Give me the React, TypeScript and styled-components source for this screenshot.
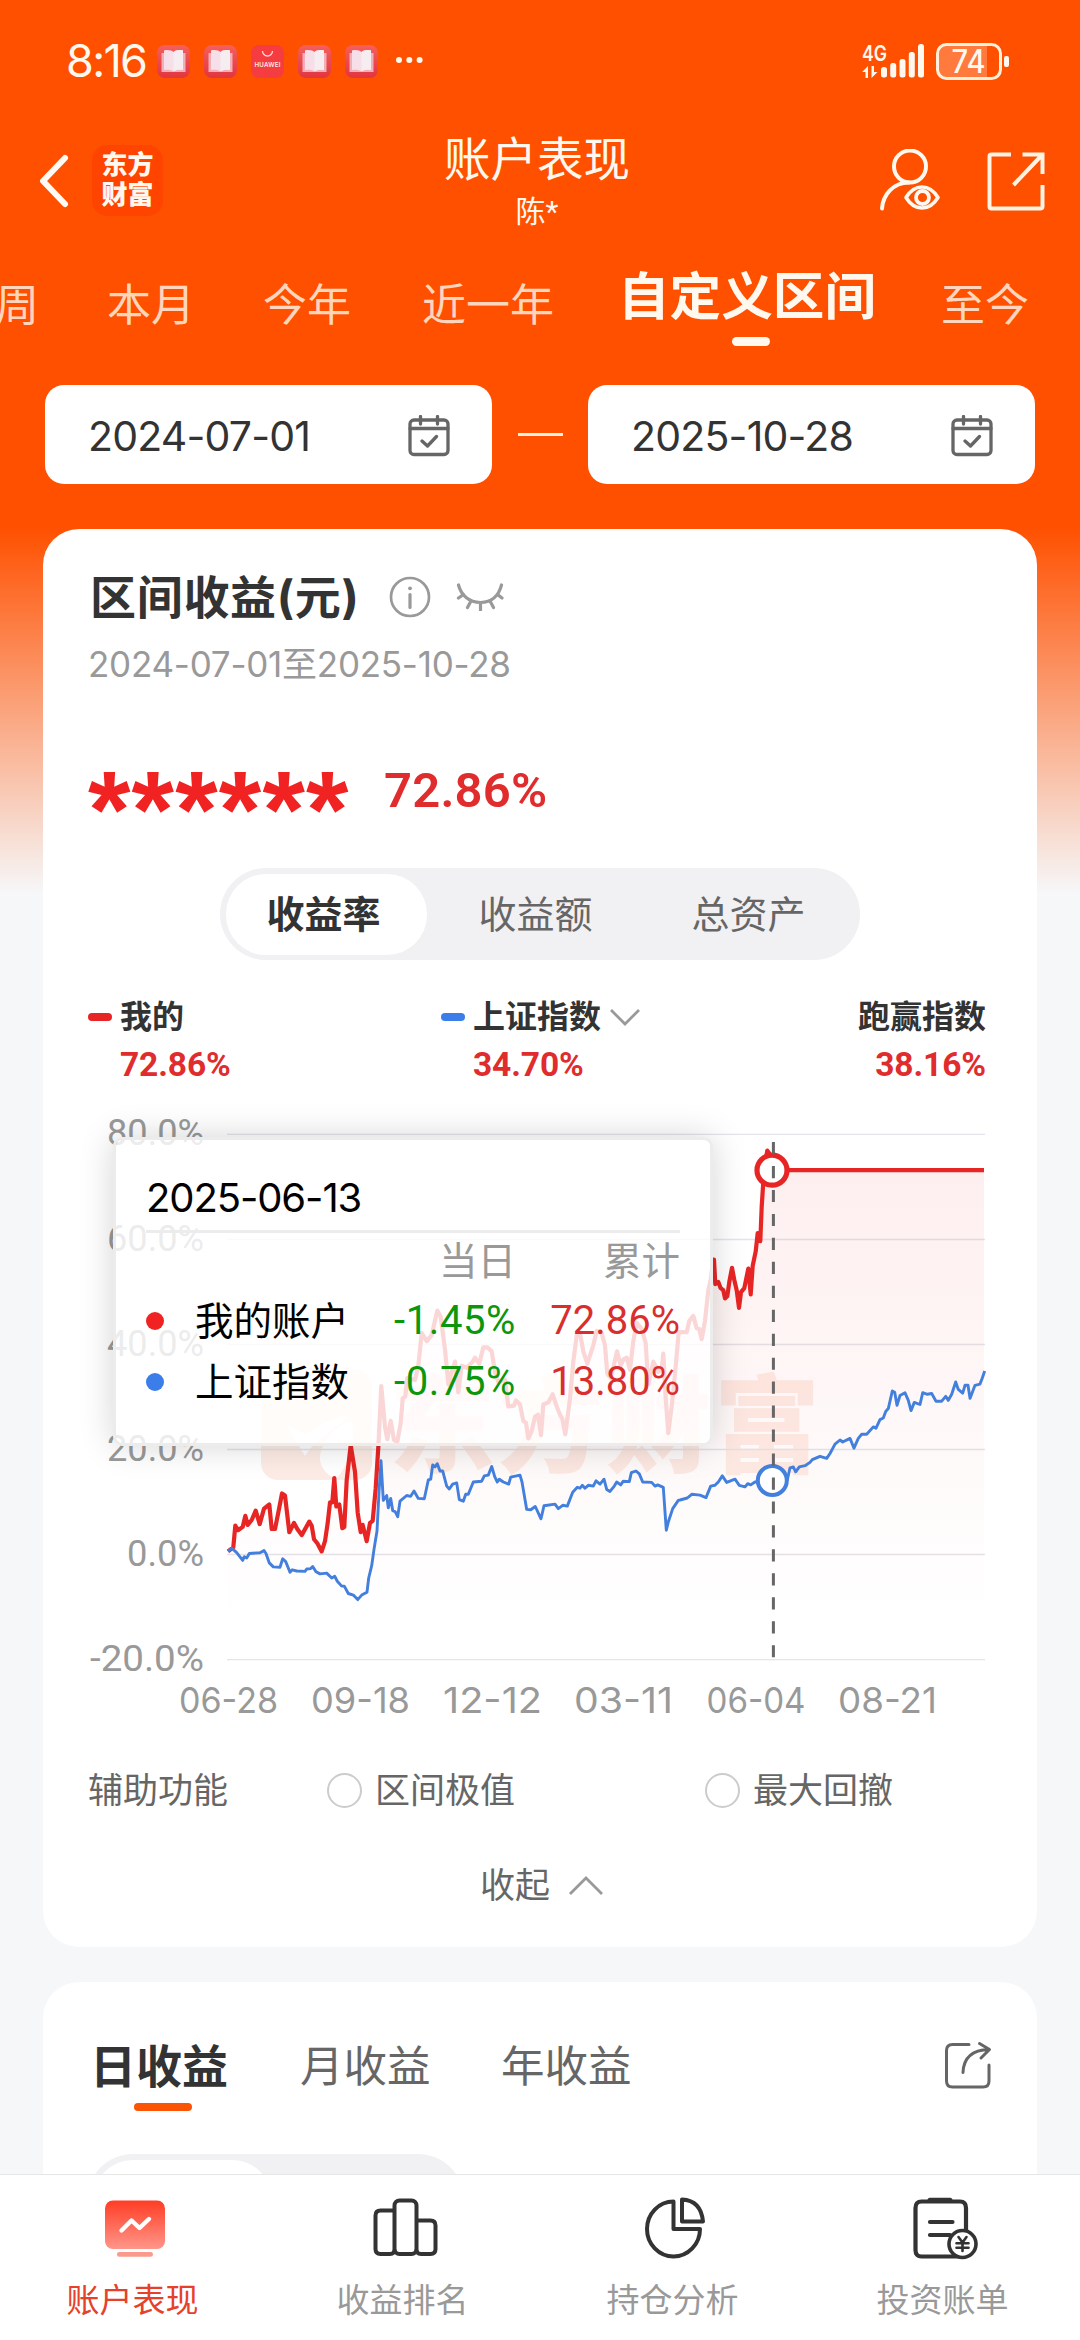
import React from "react";
import styled, { createGlobalStyle, css } from "styled-components";

const GlobalStyle = createGlobalStyle`
  * { box-sizing: border-box; }
  body {
    margin: 0;
    background: #f6f7f9;
    font-family: Inter, "Noto Sans CJK SC", "Noto Sans", sans-serif;
    color: #333;
  }
  svg { display: block; flex: none; }
`;

const FIGURES = `Roboto, "Noto Sans CJK SC", sans-serif`;

const ORANGE = "#ff5000";
const CREAM = "#fff8ee";
const RED = "#e02c2c";
const BLUE = "#437fdc";

const Screen = styled.div`
  width: 1080px;
  height: 2340px;
  overflow: hidden;
  display: flex;
  flex-direction: column;
`;

const Content = styled.main`
  flex: 1;
  min-height: 0;
  overflow: hidden;
  background: linear-gradient(${ORANGE} 0, ${ORANGE} 527px, #f6f7f9 893px);
`;

/* ---------- status bar ---------- */

const StatusBar = styled.div`
  display: flex;
  align-items: center;
  justify-content: space-between;
  height: 91px;
  padding: 31px 71px 0 66px;
  color: ${CREAM};
`;

const StatusGroup = styled.div<{ $gap: number }>`
  display: flex;
  align-items: center;
  gap: ${(p) => p.$gap}px;
`;

const Clock = styled.span`
  width: 77px;
  font-size: 45px;
  line-height: 60px;
  letter-spacing: -1.7px;
`;

const BookIcon = () => (
  <svg width="33" height="33" viewBox="0 0 33 33">
    <defs>
      <linearGradient id="book" x1="0" y1="0" x2="0" y2="1">
        <stop offset="0" stopColor="#f4605c" />
        <stop offset="1" stopColor="#e2353f" />
      </linearGradient>
    </defs>
    <rect width="33" height="33" rx="8" fill="url(#book)" />
    <path d="M4.500 8h24v19h-24z" fill="#f3aeb8" />
    <path d="M7 5.500c4-1 8 0 9.500 1.500 1.500-1.500 5.500-2.500 9.500-1.500V25c-4-.6-8 0-9.500 1.600C15 25 11 24.400 7 25z" fill="#f6dfe8" />
    <path d="M16.500 7c1.500-1.500 5.500-2.500 9.500-1.500V25c-4-.6-8 0-9.500 1.600z" fill="#f5edf0" />
  </svg>
);

const StoreIcon = () => (
  <svg width="33" height="33" viewBox="0 0 33 33">
    <rect width="33" height="33" rx="8" fill="#f43c41" />
    <path d="M11.500 6a5 5 0 0 0 10 0" fill="none" stroke="#ffd9d0" strokeWidth="1.300" />
    <text x="16.500" y="21.500" textAnchor="middle" fontSize="6.200" fontWeight="600" fill="#ffe9e2" textLength="26">
      HUAWEI
    </text>
  </svg>
);

const MoreDots = () => (
  <svg width="31" height="8" viewBox="-3 0 31 8" fill={CREAM}>
    <circle cx="4" cy="3" r="3" />
    <circle cx="14.300" cy="3" r="3" />
    <circle cx="24.600" cy="3" r="3" />
  </svg>
);

const SignalIcon = () => (
  <svg width="63" height="36" viewBox="0 0 63 36" fill={CREAM}>
    <text x="0" y="18" fontSize="22" fontWeight="600" textLength="25" lengthAdjust="spacingAndGlyphs">4G</text>
    <path d="M0 29l6-6v12H3.500v-6zM15.500 29l-6 6V23h2.500v6z" />
    <rect x="19" y="24" width="6" height="10.500" rx="2.500" />
    <rect x="28.200" y="20" width="6" height="14.500" rx="2.500" />
    <rect x="37.500" y="16" width="6" height="18.500" rx="2.500" />
    <rect x="46.800" y="9" width="6" height="25.500" rx="2.500" />
    <rect x="56" y="1" width="6" height="33.500" rx="2.500" />
  </svg>
);

const BatteryIcon = () => (
  <svg width="73" height="37" viewBox="0 0 73 37">
    <path d="M10 2.500H51V34.500H10a8 8 0 0 1-8-8v-16a8 8 0 0 1 8-8z" fill="#ff7a3c" />
    <rect x="1.500" y="1.500" width="63" height="34" rx="9" fill="none" stroke="#fff0dc" strokeWidth="3" />
    <rect x="68" y="13" width="5" height="11" rx="2" fill={CREAM} />
    <text x="15.500" y="30" fontSize="32" fontWeight="500" fill={CREAM} textLength="34" lengthAdjust="spacingAndGlyphs">74</text>
  </svg>
);

/* ---------- header ---------- */

const Header = styled.header`
  display: grid;
  grid-template-columns: 397px 280px 1fr;
  height: 100px;
  margin-top: 40px;
  color: ${CREAM};
`;

const HeaderLeft = styled.div`
  display: flex;
  align-items: center;
  gap: 22px;
  padding-left: 38px;
`;

const HeaderRight = styled.div`
  display: flex;
  align-items: center;
  justify-content: flex-end;
  gap: 45px;
  padding-right: 35px;
`;

const Logo = styled.div`
  width: 71px;
  height: 71px;
  margin-top: -2px;
  padding-top: 5px;
  border-radius: 15px;
  background: #ff4400;
  text-align: center;
  font-size: 26px;
  font-weight: 900;
  line-height: 30px;
`;

const HeaderTitle = styled.div`
  text-align: center;
  font-size: 46.5px;
  line-height: 57px;
`;

const AccountName = styled.div`
  margin-top: 5px;
  text-align: center;
  font-family: ${FIGURES};
  font-size: 30px;
  line-height: 38px;
`;

const BackIcon = () => (
  <svg width="32" height="56" viewBox="0 0 32 56" fill="none" stroke="#fffaf4" strokeWidth="6" strokeLinecap="round" strokeLinejoin="round">
    <path d="M27 5L5 28l22 23" />
  </svg>
);

const UserViewIcon = () => (
  <svg width="64" height="64" viewBox="0 0 64 64" fill="none" stroke={CREAM} strokeWidth="4" strokeLinecap="round">
    <circle cx="32" cy="17.500" r="16" />
    <path d="M4 59.500C5 46 15 33.500 31 33.500" />
    <path d="M28 48.500c4-6.500 9-10.500 16-10.500s12 4 16 10.500c-4 6.500-9 10.500-16 10.500s-12-4-16-10.500z" strokeWidth="3.600" strokeLinejoin="round" />
    <circle cx="44.500" cy="48.500" r="6.500" strokeWidth="3.800" />
  </svg>
);

const OpenIcon = () => (
  <svg width="58" height="60" viewBox="0 0 58 60" fill="none" stroke="#fff3e4" strokeWidth="4">
    <path d="M24 3.500H4.500Q2.500 3.500 2.500 5.500V55.500Q2.500 57.500 4.500 57.500H53Q55.500 57.500 55.500 55.500V34" />
    <path d="M35.500 3.500h20V23M55 4L26.500 34" />
  </svg>
);

/* ---------- period tabs ---------- */

const PeriodTabs = styled.nav`
  display: flex;
  align-items: flex-start;
  gap: 68px;
  height: 119px;
  padding-top: 35px;
  margin-left: -5px;
  white-space: nowrap;
`;

const PeriodTab = styled.div<{ $active?: boolean; $nudge?: number }>`
  flex: none;
  font-size: 44px;
  line-height: 60px;
  margin-top: 9px;
  margin-left: ${(p) => p.$nudge || 0}px;
  color: #ffd6bd;
  ${(p) =>
    p.$active &&
    css`
      margin: 0 -3px 0 -4px;
      font-size: 51.6px;
      font-weight: 700;
      color: ${CREAM};
      &::after {
        content: "";
        display: block;
        width: 38px;
        height: 9px;
        margin: 11px auto 0;
        border-radius: 5px;
        background: ${CREAM};
        transform: translateX(4px);
      }
    `}
`;

/* ---------- date range ---------- */

const DateRange = styled.div`
  display: flex;
  align-items: center;
  justify-content: space-between;
  height: 99px;
  margin: 35px 45px 0;
`;

const DateField = styled.div`
  display: flex;
  align-items: center;
  justify-content: space-between;
  width: 447px;
  height: 99px;
  padding: 2px 42px 0 43px;
  border-radius: 19px;
  background: #fff;
  font-size: 41px;
  letter-spacing: -0.8px;
`;

const RangeDash = styled.div`
  width: 45px;
  height: 3px;
  background: #fff0e0;
`;

const CalendarIcon = () => (
  <svg width="42" height="42" viewBox="0 0 42 42" fill="none" stroke="#666" strokeWidth="3.300" strokeLinecap="round" strokeLinejoin="round">
    <rect x="2" y="5" width="38" height="34.500" rx="4" />
    <path d="M2 13.500h38M12.500 1.500v7.500M29.500 1.500v7.500M14 26l5.500 5L28.500 21.500" />
  </svg>
);

/* ---------- cards ---------- */

const Card = styled.section`
  margin: 45px 43px 0;
  padding: 38px 0 37px;
  border-radius: 36px;
  background: #fff;
`;

const CardTitleRow = styled.div`
  display: flex;
  align-items: center;
  height: 60px;
  padding-left: 47px;
`;

const CardTitle = styled.h1`
  margin: 0 34px 0 0;
  width: 265px;
  font-size: 46px;
  font-weight: 700;
  line-height: 60px;
  letter-spacing: 0.7px;
  white-space: nowrap;
`;

const PeriodText = styled.div`
  margin: 17px 0 0 45px;
  font-size: 35px;
  line-height: 40px;
  letter-spacing: -0.25px;
  color: #999;
`;

const InfoIcon = () => (
  <svg width="42" height="42" viewBox="0 0 42 42" fill="none" stroke="#999" strokeWidth="2.700" strokeLinecap="round">
    <circle cx="21" cy="21" r="19" />
    <path d="M21 18.500v13" strokeWidth="3.200" />
    <circle cx="21" cy="12.300" r="1.900" fill="#999" stroke="none" />
  </svg>
);

const EyeClosed = styled.svg`
  margin-left: 25px;
`;

const EyeClosedIcon = () => (
  <EyeClosed width="48" height="28" viewBox="0 0 48 28" fill="none" stroke="#999" strokeWidth="3.200" strokeLinecap="round">
    <path d="M2.500 2C5 12 13 19.500 24.500 19.500S43 12 45.500 2M7.500 11.500L2.500 15M15 18l-3.500 6.500M24.500 19.500V27M34 18l3.500 6.500M41.500 11.500L46 15" />
  </EyeClosed>
);

const ProfitRow = styled.div`
  display: flex;
  align-items: flex-start;
  height: 60px;
  margin: 76px 0 0 45px;
`;

const MaskedAmount = styled.span`
  width: 296px;
  font-family: "Liberation Sans", Arial, sans-serif;
  font-size: 109px;
  font-weight: 700;
  line-height: 99px;
  letter-spacing: 1.2px;
  color: #f02222;
`;

const ProfitRate = styled.span`
  font-family: ${FIGURES};
  font-size: 49px;
  font-weight: 600;
  line-height: 61px;
  letter-spacing: 0.2px;
  color: ${RED};
`;

const Segmented = styled.div`
  display: grid;
  grid-template-columns: 201px 213px 213px;
  width: 640px;
  height: 92px;
  margin: 48px 0 0 177px;
  padding: 6px;
  border-radius: 46px;
  background: #f1f1f4;
`;

const Segment = styled.div<{ $active?: boolean }>`
  padding: ${(p) => (p.$active ? "0 6px 0 0" : "0 0 0 4px")};
  border-radius: 40px;
  text-align: center;
  font-size: 38px;
  line-height: 81px;
  color: ${(p) => (p.$active ? "#333" : "#666")};
  font-weight: ${(p) => (p.$active ? 700 : 400)};
  background: ${(p) => (p.$active ? "#fff" : "transparent")};
`;

const Legend = styled.div`
  display: grid;
  grid-template-columns: 353px 1fr auto;
  height: 88px;
  margin: 37px 51px 0 45px;
`;

const LegendItem = styled.div<{ $right?: boolean }>`
  display: grid;
  grid-template-columns: auto 1fr;
  grid-template-rows: 40px 40px;
  column-gap: 8px;
  row-gap: 8px;
  align-items: center;
  justify-items: ${(p) => (p.$right ? "end" : "start")};
`;

const LegendMark = styled.span<{ $color: string }>`
  width: 24px;
  height: 8px;
  border-radius: 4px;
  background: ${(p) => p.$color};
`;

const LegendName = styled.span`
  display: flex;
  align-items: center;
  gap: 9px;
  height: 40px;
  font-size: 32px;
  font-weight: 700;
  line-height: 42px;
`;

const LegendValue = styled.span`
  grid-column: 2;
  font-family: ${FIGURES};
  font-size: 33.5px;
  font-weight: 700;
  line-height: 40px;
  letter-spacing: -0.1px;
  color: ${RED};
`;

const ChevronIcon = ({ up, w, h }: { up?: boolean; w: number; h: number }) => (
  <svg width={w} height={h} viewBox={`0 0 ${w} ${h}`} fill="none" stroke="#999" strokeWidth="2.800">
    <path d={up ? `M1 ${h - 1}L${w / 2} 2L${w - 1} ${h - 1}` : `M1 1L${w / 2} ${h - 2}L${w - 1} 1`} />
  </svg>
);

/* ---------- chart ---------- */

type Sample = [number, number];

const ChartArea = styled.div`
  position: relative;
  height: 645px;
  margin-left: 17px;
`;

const shift = (dx: number, samples: Sample[]): Sample[] => samples.map(([x, y]) => [x + dx, y]);

const toPoints = (samples: Sample[]) =>
  samples.map(([x, y]) => `${(x / 3).toFixed(1)},${(y / 2.45).toFixed(1)}`).join(" ");

const mine: Sample[] = [
  [504, 1155], [520, 1145], [526, 1092], [534, 1103], [548, 1095], [556, 1068], [563, 1090], [575, 1078], [587, 1055],
  [599, 1088], [612, 1050], [628, 1040], [635, 1100], [645, 1100], [655, 1060], [666, 1013], [675, 1018], [688, 1108],
  [702, 1085], [712, 1100], [725, 1115], [748, 1082], [755, 1092], [762, 1125], [772, 1135], [785, 1155], [795, 1130],
  [803, 1085], [810, 1035], [817, 1035], [823, 975], [829, 1045], [838, 1040], [847, 1098], [853, 1095], [860, 980],
  [872, 895], [885, 960], [893, 1060], [902, 1108], [908, 1090], [920, 1130], [930, 1085], [938, 1080], [947, 1000],
  [955, 900],
  ...shift(960, [
    [4, 750], [15, 850], [22, 880], [32, 835], [42, 882], [52, 886], [62, 840], [68, 780], [76, 775], [82, 730],
    [105, 735], [115, 700], [125, 620], [140, 640], [155, 625], [162, 600], [172, 565], [182, 580], [195, 660],
    [205, 745], [215, 715], [225, 690], [235, 765], [245, 700], [260, 705], [278, 690], [285, 680], [298, 695],
    [310, 655], [322, 655], [335, 665], [345, 715], [355, 740], [375, 735], [385, 800], [402, 798], [408, 785],
    [420, 795], [430, 835], [438, 840], [445, 878], [455, 860], [465, 825], [474, 820], [483, 870], [490, 795],
    [505, 790], [518, 770], [530, 800], [540, 820], [547, 830], [556, 868], [570, 780], [580, 690], [592, 615],
    [600, 620], [610, 665], [622, 695], [640, 650], [650, 615], [665, 620], [675, 650], [682, 720], [692, 730],
    [700, 705], [711, 665], [722, 700], [730, 685], [740, 680], [750, 710], [760, 640], [770, 595], [785, 610],
    [797, 645], [805, 745], [820, 690], [835, 715], [845, 710], [850, 670], [857, 780], [865, 865], [875, 800],
    [885, 720], [896, 618], [920, 618], [928, 590], [940, 578], [950, 608], [958, 610], [965, 635], [975, 590],
    [985, 515], [992, 490], [1000, 440],
  ]),
  ...shift(1860, [
    [102, 440], [106, 500], [115, 495], [122, 510], [130, 515], [135, 535], [142, 530], [148, 495], [156, 460],
    [163, 490], [170, 515], [177, 558], [183, 520], [193, 510], [205, 462], [212, 525], [218, 455], [227, 420],
    [233, 375], [241, 395], [245, 310], [250, 250], [256, 200], [262, 173], [268, 180], [276, 221], [912, 221],
  ]),
];

const index: Sample[] = [
  [504, 1155], [515, 1147], [530, 1158], [548, 1177], [553, 1168], [560, 1171], [568, 1160], [600, 1158], [612, 1153],
  [618, 1160], [628, 1183], [640, 1193], [660, 1194], [668, 1173], [677, 1180], [690, 1206], [697, 1200], [710, 1203],
  [735, 1204], [740, 1198], [752, 1197], [758, 1192], [768, 1205], [780, 1210], [800, 1208], [815, 1220], [824, 1216],
  [832, 1228], [845, 1240], [853, 1240], [865, 1258], [880, 1262], [893, 1273], [905, 1262], [921, 1255], [926, 1220],
  [935, 1190], [942, 1150], [951, 1105], [957, 1010],
  ...shift(960, [
    [3, 933], [10, 1030], [20, 1018], [25, 1048], [32, 1025], [38, 1055], [46, 1058], [53, 1070], [60, 1032],
    [80, 1018], [92, 1020], [102, 1007], [115, 1025], [133, 1026], [145, 980], [152, 978], [158, 943], [165, 948],
    [172, 940], [180, 958], [188, 958], [200, 995], [208, 1002], [218, 990], [230, 987], [238, 1028], [250, 1032],
    [257, 1015], [265, 1015], [280, 985], [305, 983], [313, 970], [325, 968], [335, 947], [344, 972], [352, 985],
    [358, 978], [370, 985], [386, 990], [392, 973], [420, 968], [426, 985], [440, 1052], [452, 1053], [466, 1045],
    [483, 1075], [492, 1043], [525, 1039], [535, 1050], [548, 1042], [562, 1044], [578, 1010], [592, 998],
    [600, 1000], [607, 993], [615, 1000], [625, 993], [640, 995], [648, 982], [660, 990], [672, 978], [680, 1003],
    [690, 1008], [703, 995], [710, 985], [722, 992], [730, 983], [748, 984], [754, 962], [768, 958], [778, 965],
    [788, 985], [815, 986], [825, 995], [833, 992], [850, 998], [859, 1103], [865, 1083], [878, 1050], [895, 1030],
  ]),
  ...shift(1860, [
    [0, 1029], [22, 1024], [35, 1015], [60, 1017], [78, 1023], [92, 995], [105, 993], [115, 985], [127, 970],
    [140, 986], [165, 978], [178, 993], [195, 997], [203, 989], [212, 992], [225, 985], [276, 981], [322, 980],
    [330, 950], [340, 948], [347, 960], [358, 948], [375, 945], [390, 937], [397, 930], [420, 922], [440, 927],
    [450, 915], [465, 892], [480, 882], [488, 887], [510, 878], [522, 902], [535, 878], [545, 868], [560, 868],
    [580, 850], [588, 853], [600, 832], [610, 828], [617, 812], [625, 805], [637, 762], [644, 765], [651, 797],
    [660, 773], [675, 766], [685, 785], [693, 810], [703, 790], [720, 795], [728, 766], [742, 770], [755, 768],
    [768, 787], [785, 787], [797, 775], [805, 785], [815, 770], [827, 740], [835, 758], [848, 767], [855, 748],
    [864, 748], [870, 780], [885, 748], [900, 745], [907, 730], [914, 713],
  ]),
];

const yTicks = [
  { label: "80.0%", y: 54.3, w: 97 },
  { label: "60.0%", y: 159.5, w: 97 },
  { label: "40.0%", y: 264.5, w: 97 },
  { label: "20.0%", y: 369.5, w: 97 },
  { label: "0.0%", y: 474.5, w: 77 },
  { label: "-20.0%", y: 579.6, w: 114 },
];

const xTicks = [
  { label: "06-28", x: 168 },
  { label: "09-18", x: 300 },
  { label: "12-12", x: 432 },
  { label: "03-11", x: 563 },
  { label: "06-04", x: 695.5 },
  { label: "08-21", x: 827 },
];

const ReturnChart = () => (
  <svg width="940" height="645" viewBox="0 5 940 645">
    <defs>
      <linearGradient id="fill" gradientUnits="userSpaceOnUse" x1="0" y1="90" x2="0" y2="540">
        <stop offset="0" stopColor="#f04040" stopOpacity="0.085" />
        <stop offset="1" stopColor="#f04040" stopOpacity="0" />
      </linearGradient>
    </defs>
    <g fill="#fbcdb8" opacity="0.36">
      <path
        transform="translate(0 -4)"
        fillRule="evenodd"
        d="M220 293h75a17 17 0 0 1 17 17v77a17 17 0 0 1-17 17h-77a17 17 0 0 1-17-17v-68c22 14 48-2 92-28zM227 350l18 30c8-14 28-26 44-40-22 2-42 18-44 18zM262 372c-6 14 2 26 14 31 12-12 20-36 16-58-14 4-24 12-30 27z"
      />
      <text x="329" y="384" fontSize="106" fontWeight="900" textLength="431">
        东方财富
      </text>
    </g>
    {yTicks.map((t) => (
      <g key={t.label}>
        <path d={`M167 ${t.y}H925`} stroke="#e4e4ea" strokeWidth="1.300" />
        <text
          x={144 - t.w}
          y={t.y + 11}
          fontSize="36"
          fontFamily={FIGURES}
          fill="#999"
          textLength={t.w}
          lengthAdjust="spacingAndGlyphs"
        >
          {t.label}
        </text>
      </g>
    ))}
    {xTicks.map((t) => (
      <text key={t.label} x={t.x - 49} y="633" fontSize="35.500" fill="#999" textLength="99" lengthAdjust="spacingAndGlyphs">
        {t.label}
      </text>
    ))}
    <polygon points={`168,579 ${toPoints(mine)} 924,579`} fill="url(#fill)" />
    <polyline points={toPoints(mine)} fill="none" stroke="#e82525" strokeWidth="4.200" strokeLinejoin="round" />
    <polyline points={toPoints(index)} fill="none" stroke={BLUE} strokeWidth="2.900" strokeLinejoin="round" />
    <circle cx="712" cy="90.200" r="15" fill="#fff" stroke="#e82525" strokeWidth="5.200" />
    <circle cx="712.300" cy="400.500" r="14.500" fill="#fff" stroke={BLUE} strokeWidth="4" />
    <path d="M713.400 62V579.500" stroke="#666" strokeWidth="3" strokeDasharray="12.200 11.760" />
  </svg>
);

const Tooltip = styled.div`
  position: absolute;
  left: 53px;
  top: 52px;
  width: 600px;
  height: 309px;
  padding: 28px 30px 0;
  border: 3px solid #ececec;
  border-radius: 9px;
  background: rgba(255, 255, 255, 0.81);
  background-clip: padding-box;
  box-shadow: 0 0 34px rgba(0, 0, 0, 0.17);
  color: #000;
`;

const TooltipDate = styled.div`
  height: 65px;
  border-bottom: 3px solid #ececec;
  font-size: 40px;
  line-height: 60px;
  letter-spacing: -1.1px;
`;

const TooltipGrid = styled.div`
  display: grid;
  grid-template-columns: 49px 153px 1fr 164px;
  grid-template-rows: 56px 64px 57px;
  align-items: center;
  font-size: 38.500px;
  line-height: 56px;
  white-space: nowrap;
`;

const TooltipHead = styled.span`
  justify-self: end;
  color: #999;
`;

const Dot = styled.span<{ $color: string }>`
  width: 18px;
  height: 18px;
  border-radius: 50%;
  background: ${(p) => p.$color};
`;

const TooltipValue = styled.span<{ $color: string; $spacing?: number }>`
  justify-self: end;
  font-family: ${FIGURES};
  font-size: 40px;
  letter-spacing: ${(p) => p.$spacing || 0}px;
  color: ${(p) => p.$color};
`;

/* ---------- helper toggles ---------- */

const HelperRow = styled.div`
  display: grid;
  grid-template-columns: 239px 378px 1fr;
  margin: 35px 0 0 45px;
  font-size: 35px;
  line-height: 50px;
  color: #666;
`;

const Toggle = styled.span`
  display: flex;
  align-items: center;
  gap: 13px;
`;

const Radio = styled.span`
  width: 35px;
  height: 35px;
  border: 2.8px solid #ccc;
  border-radius: 50%;
`;

const Collapse = styled.div`
  display: flex;
  align-items: center;
  gap: 19px;
  height: 50px;
  margin: 45px 0 0 437px;
  font-size: 35px;
  line-height: 50px;
  color: #666;
`;

/* ---------- profit calendar card ---------- */

const ProfitCard = styled(Card)`
  margin-top: 35px;
  padding-top: 54px;
  height: 400px;
`;

const ProfitTabs = styled.div`
  display: flex;
  align-items: flex-start;
  padding: 0 45px 0 47px;
  height: 118px;
`;

const ProfitTab = styled.div<{ $active?: boolean }>`
  width: ${(p) => (p.$active ? 210 : 201)}px;
  font-size: ${(p) => (p.$active ? 46 : 43.5)}px;
  font-weight: ${(p) => (p.$active ? 700 : 400)};
  line-height: 60px;
  color: ${(p) => (p.$active ? "#333" : "#666")};
  ${(p) =>
    p.$active &&
    css`
      &::after {
        content: "";
        display: block;
        width: 58px;
        height: 8px;
        margin: 7px 0 0 44px;
        border-radius: 4px;
        background: #fb5404;
      }
    `}
`;

const Spacer = styled.span`
  flex: 1;
`;

const SmallSegmented = styled(Segmented)`
  grid-template-columns: 179px 1fr;
  width: 377px;
  margin: 0 0 0 44px;
`;

const ShareIcon = () => (
  <svg width="48" height="60" viewBox="0 -6 48 60" fill="none" stroke="#666" strokeWidth="3" strokeLinecap="round" strokeLinejoin="round">
    <path d="M25 2.500H8.500Q2.500 2.500 2.500 8.500V39Q2.500 45 8.500 45H39Q45 45 45 39V23" />
    <path d="M19 30.500C19.500 17 27 8 45 7.500M35.500 1.500L45.500 7.500L37 16" />
  </svg>
);

/* ---------- bottom navigation ---------- */

const BottomNav = styled.nav`
  display: grid;
  grid-template-columns: repeat(4, 270px);
  height: 166px;
  border-top: 1.5px solid #e6e6e6;
  background: #fff;
`;

const NavItem = styled.div`
  display: flex;
  flex-direction: column;
  align-items: center;
  padding-top: 21px;
`;

const NavLabel = styled.span<{ $active?: boolean }>`
  margin-top: 14px;
  padding-right: 5px;
  font-size: 33px;
  line-height: 41px;
  color: ${(p) => (p.$active ? "#e5412b" : "#999")};
`;

const MonitorIcon = () => (
  <svg width="70" height="70" viewBox="0 0 70 70">
    <defs>
      <linearGradient id="monitor" x1="0" y1="0" x2="0" y2="1">
        <stop offset="0" stopColor="#ff3d24" />
        <stop offset="1" stopColor="#ff968a" />
      </linearGradient>
    </defs>
    <rect x="5" y="4.500" width="60" height="48.500" rx="8" fill="url(#monitor)" />
    <rect x="17" y="56" width="36" height="4.800" rx="2.400" fill="#f99a8c" />
    <path d="M21.500 34.500L31.500 24.500L39.500 32L49 23" fill="none" stroke="#fff" strokeWidth="4.400" strokeLinecap="round" strokeLinejoin="round" />
  </svg>
);

const BarsIcon = () => (
  <svg width="70" height="70" viewBox="0 0 70 70" fill="none" stroke="#333" strokeWidth="4">
    <path d="M24.500 14.500H10.500Q5.500 14.500 5.500 19.500V53Q5.500 58 10.500 58H20Q24.500 58 24.500 53.500" />
    <path d="M46.500 24.500H60.500Q65.500 24.500 65.500 29.500V53Q65.500 58 60.500 58H51Q46.500 58 46.500 53.500" />
    <rect x="24.500" y="4.500" width="22" height="53.500" rx="5" />
  </svg>
);

const PieIcon = () => (
  <svg width="70" height="70" viewBox="0 0 70 70" fill="none" stroke="#333" strokeWidth="4" strokeLinejoin="round">
    <path d="M33.500 5.500A26.500 27.500 0 1 0 60 33H33.500z" />
    <path d="M42 3.500Q61 4.500 63 25.500H42z" />
  </svg>
);

const BillIcon = () => (
  <svg width="70" height="70" viewBox="0 0 70 70" fill="none" stroke="#333" strokeWidth="4.200" strokeLinecap="round">
    <path d="M48 60.500H11.500Q5.500 60.500 5.500 54V12Q5.500 5.500 11.500 5.500H50Q56 5.500 56 12V34" />
    <path d="M20 4.300h20" strokeWidth="5" />
    <path d="M20 26h22.500M20 39h20" />
    <circle cx="52.500" cy="48" r="13.500" fill="#fff" strokeWidth="3.600" />
    <path d="M48.500 41l4 5.500l4-5.500M52.500 46.500V55M46.500 47.200h12M46.500 51.700h12" strokeWidth="2.600" />
  </svg>
);

const App = () => (
  <Screen>
    <GlobalStyle />
    <Content>
      <StatusBar>
        <StatusGroup $gap={14}>
          <Clock>8:16</Clock>
          <BookIcon />
          <BookIcon />
          <StoreIcon />
          <BookIcon />
          <BookIcon />
          <MoreDots />
        </StatusGroup>
        <StatusGroup $gap={11}>
          <SignalIcon />
          <BatteryIcon />
        </StatusGroup>
      </StatusBar>

      <Header>
        <HeaderLeft>
          <BackIcon />
          <Logo>
            东方
            <br />
            财富
          </Logo>
        </HeaderLeft>
        <div>
          <HeaderTitle>账户表现</HeaderTitle>
          <AccountName>陈*</AccountName>
        </div>
        <HeaderRight>
          <UserViewIcon />
          <OpenIcon />
        </HeaderRight>
      </Header>

      <PeriodTabs>
        <PeriodTab>周</PeriodTab>
        <PeriodTab>本月</PeriodTab>
        <PeriodTab>今年</PeriodTab>
        <PeriodTab $nudge={3}>近一年</PeriodTab>
        <PeriodTab $active>自定义区间</PeriodTab>
        <PeriodTab>至今</PeriodTab>
      </PeriodTabs>

      <DateRange>
        <DateField>
          2024-07-01
          <CalendarIcon />
        </DateField>
        <RangeDash />
        <DateField>
          2025-10-28
          <CalendarIcon />
        </DateField>
      </DateRange>

      <Card>
        <CardTitleRow>
          <CardTitle>区间收益(元)</CardTitle>
          <InfoIcon />
          <EyeClosedIcon />
        </CardTitleRow>
        <PeriodText>2024-07-01至2025-10-28</PeriodText>
        <ProfitRow>
          <MaskedAmount>******</MaskedAmount>
          <ProfitRate>72.86%</ProfitRate>
        </ProfitRow>
        <Segmented>
          <Segment $active>收益率</Segment>
          <Segment>收益额</Segment>
          <Segment>总资产</Segment>
        </Segmented>
        <Legend>
          <LegendItem>
            <LegendMark $color="#e82525" />
            <LegendName>我的</LegendName>
            <LegendValue>72.86%</LegendValue>
          </LegendItem>
          <LegendItem>
            <LegendMark $color="#3b7de9" />
            <LegendName>
              上证指数
              <ChevronIcon w={30} h={17} />
            </LegendName>
            <LegendValue>34.70%</LegendValue>
          </LegendItem>
          <LegendItem $right>
            <span />
            <LegendName>跑赢指数</LegendName>
            <LegendValue>38.16%</LegendValue>
          </LegendItem>
        </Legend>
        <ChartArea>
          <ReturnChart />
          <Tooltip>
            <TooltipDate>2025-06-13</TooltipDate>
            <TooltipGrid>
              <span />
              <span />
              <TooltipHead>当日</TooltipHead>
              <TooltipHead>累计</TooltipHead>
              <Dot $color="#f02222" />
              <span>我的账户</span>
              <TooltipValue $color="#0b960b" $spacing={0.6}>-1.45%</TooltipValue>
              <TooltipValue $color="#d92e2e">72.86%</TooltipValue>
              <Dot $color="#3b7de9" />
              <span>上证指数</span>
              <TooltipValue $color="#0b960b" $spacing={0.6}>-0.75%</TooltipValue>
              <TooltipValue $color="#d92e2e">13.80%</TooltipValue>
            </TooltipGrid>
          </Tooltip>
        </ChartArea>
        <HelperRow>
          <span>辅助功能</span>
          <Toggle>
            <Radio />
            区间极值
          </Toggle>
          <Toggle>
            <Radio />
            最大回撤
          </Toggle>
        </HelperRow>
        <Collapse>
          收起
          <ChevronIcon up w={34} h={19} />
        </Collapse>
      </Card>

      <ProfitCard>
        <ProfitTabs>
          <ProfitTab $active>日收益</ProfitTab>
          <ProfitTab>月收益</ProfitTab>
          <ProfitTab>年收益</ProfitTab>
          <Spacer />
          <ShareIcon />
        </ProfitTabs>
        <SmallSegmented>
          <Segment $active />
        </SmallSegmented>
      </ProfitCard>
    </Content>

    <BottomNav>
      <NavItem>
        <MonitorIcon />
        <NavLabel $active>账户表现</NavLabel>
      </NavItem>
      <NavItem>
        <BarsIcon />
        <NavLabel>收益排名</NavLabel>
      </NavItem>
      <NavItem>
        <PieIcon />
        <NavLabel>持仓分析</NavLabel>
      </NavItem>
      <NavItem>
        <BillIcon />
        <NavLabel>投资账单</NavLabel>
      </NavItem>
    </BottomNav>
  </Screen>
);

export default App;
